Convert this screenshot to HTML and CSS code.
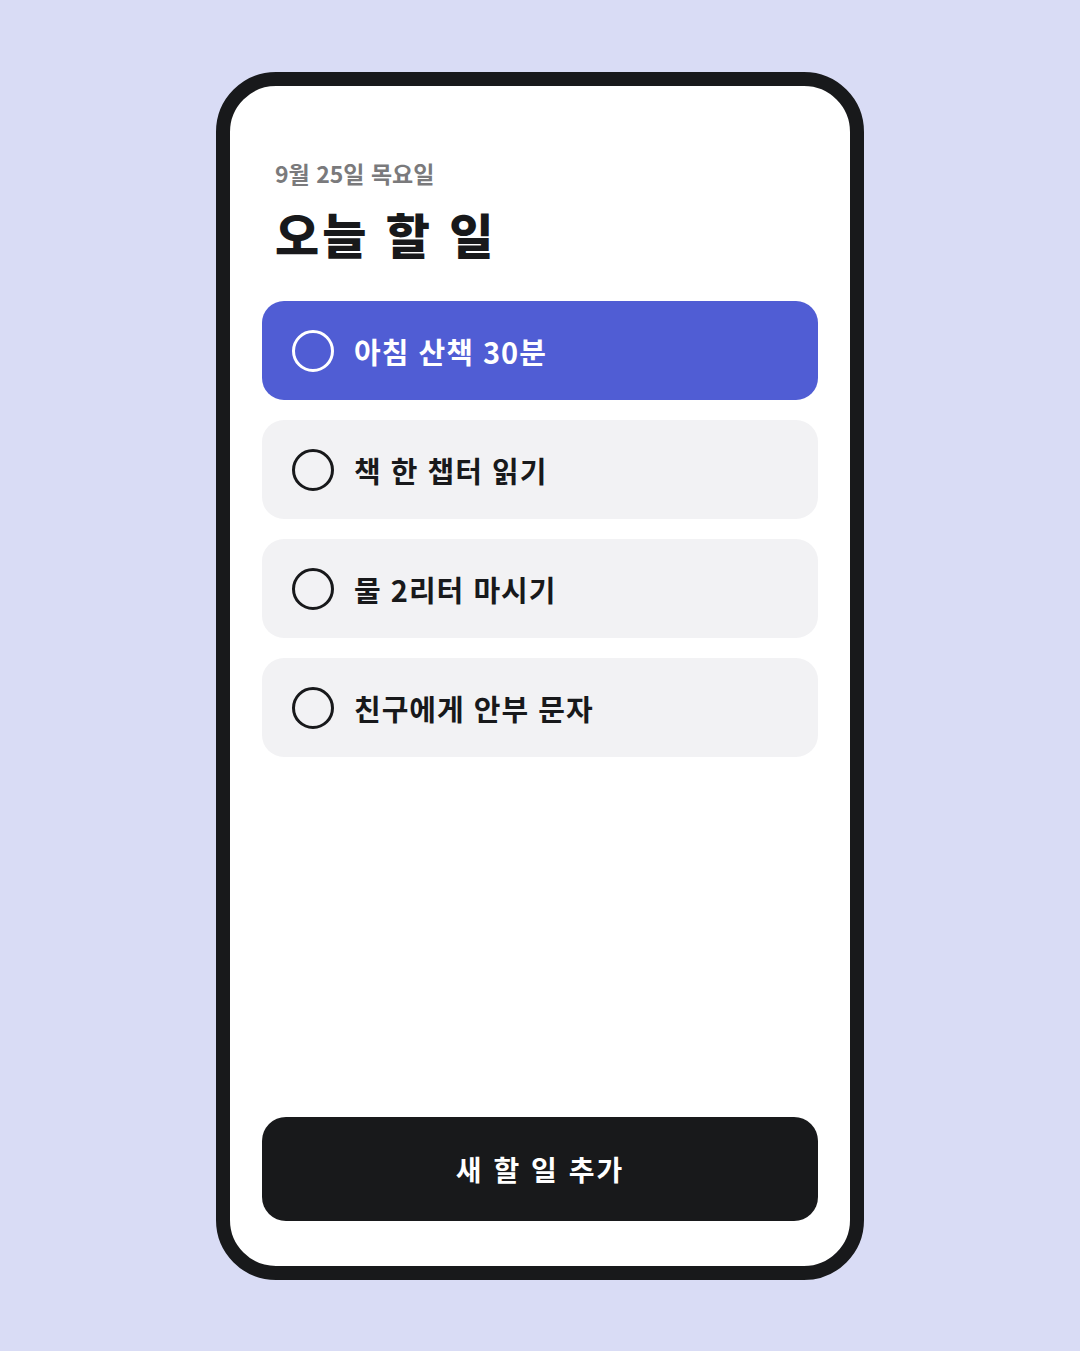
FILE: index.html
```html
<!DOCTYPE html>
<html lang="ko">
<head>
    <meta charset="UTF-8">
    <meta name="viewport" content="width=device-width, initial-scale=1.0">
    <title>오늘 할 일</title>
    <link rel="stylesheet" href="styles.css">
</head>
<body>
    <div class="phone">
        <div class="screen">
            <div class="date">9월 25일 목요일</div>
            <h1 class="title">오늘 할 일</h1>

            <div class="task-list">
                <div class="task active">
                    <span class="check"></span>
                    <span class="label">아침 산책 30분</span>
                </div>
                <div class="task">
                    <span class="check"></span>
                    <span class="label">책 한 챕터 읽기</span>
                </div>
                <div class="task">
                    <span class="check"></span>
                    <span class="label">물 2리터 마시기</span>
                </div>
                <div class="task">
                    <span class="check"></span>
                    <span class="label">친구에게 안부 문자</span>
                </div>
            </div>

            <button class="add-btn">새 할 일 추가</button>
        </div>
    </div>
</body>
</html>
```

FILE: styles.css
```css
body {
    margin: 0;
    padding: 0;
    background-color: #d9dcf5;
    font-family: "Noto Sans CJK KR", "Noto Sans", sans-serif;
}
.phone {
    width: 648px;
    height: 1208px;
    margin: 72px auto 0;
    box-sizing: border-box;
    border: 14px solid #18191b;
    border-radius: 60px;
    background: #fff;
    overflow: hidden;
}
.screen {
    height: 100%;
    box-sizing: border-box;
    padding: 70px 32px 45px;
    display: flex;
    flex-direction: column;
}
.date {
    margin-left: 13px;
    font-size: 23px;
    font-weight: 700;
    color: #7a7a7c;
    line-height: 34px;
}
.title {
    margin: 8px 0 0 13px;
    font-size: 48px;
    font-weight: 900;
    letter-spacing: 3px;
    color: #18191b;
    line-height: 70px;
}
.task-list {
    margin-top: 33px;
    display: flex;
    flex-direction: column;
    gap: 20px;
}
.task {
    height: 99px;
    display: flex;
    align-items: center;
    padding: 0 30px;
    border-radius: 22px;
    background-color: #f2f2f4;
    color: #18191b;
}
.task.active {
    background-color: #505dd4;
    color: #fff;
}
.check {
    width: 36px;
    height: 36px;
    border: 3px solid currentColor;
    border-radius: 50%;
    flex-shrink: 0;
}
.label {
    margin-left: 20px;
    font-size: 29px;
    font-weight: 700;
    letter-spacing: 1px;
}
.add-btn {
    margin-top: auto;
    height: 104px;
    border: none;
    border-radius: 24px;
    background-color: #18191b;
    color: #fff;
    font-family: inherit;
    font-size: 28px;
    font-weight: 700;
    letter-spacing: 2px;
    cursor: pointer;
}
```
